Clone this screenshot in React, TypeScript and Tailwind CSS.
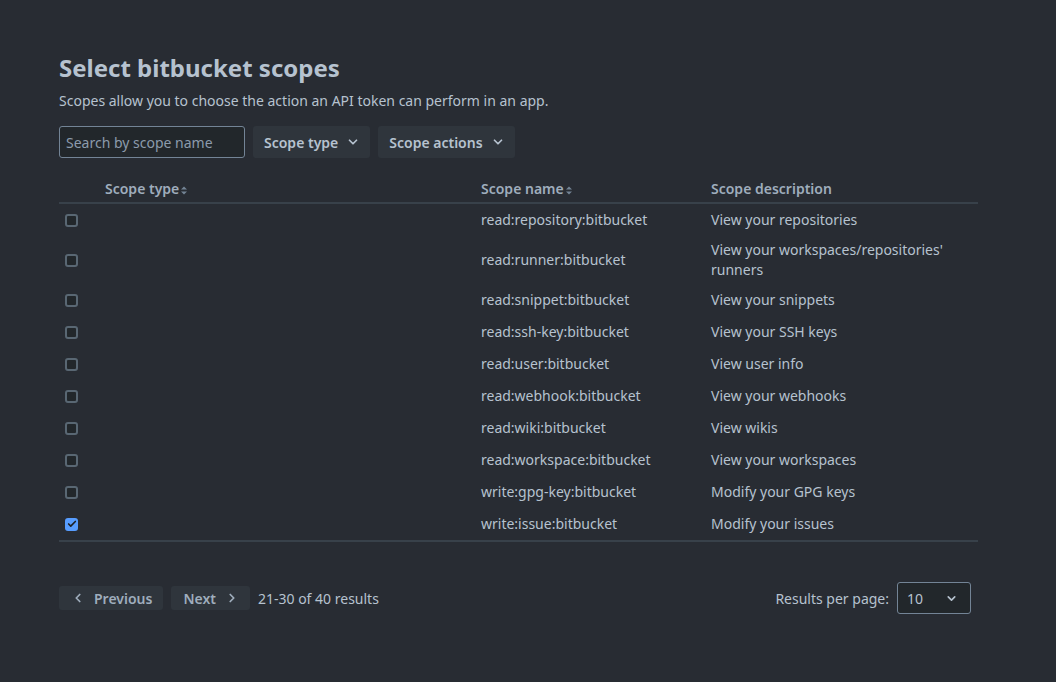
import React from 'react';
import { ChevronDown, ChevronLeft, ChevronRight, Check } from 'lucide-react';

const rows = [
  { name: 'read:repository:bitbucket', desc: 'View your repositories' },
  { name: 'read:runner:bitbucket', desc: "View your workspaces/repositories' runners" },
  { name: 'read:snippet:bitbucket', desc: 'View your snippets' },
  { name: 'read:ssh-key:bitbucket', desc: 'View your SSH keys' },
  { name: 'read:user:bitbucket', desc: 'View user info' },
  { name: 'read:webhook:bitbucket', desc: 'View your webhooks' },
  { name: 'read:wiki:bitbucket', desc: 'View wikis' },
  { name: 'read:workspace:bitbucket', desc: 'View your workspaces' },
  { name: 'write:gpg-key:bitbucket', desc: 'Modify your GPG keys' },
  { name: 'write:issue:bitbucket', desc: 'Modify your issues', checked: true },
];

const SortIcon = () => (
  <svg width="6" height="9" viewBox="0 0 6 9" className="ml-[2px] mt-[2px] inline-block">
    <path d="M0 3.5 L3 0.5 L6 3.5 Z" fill="#738496" />
    <path d="M0 5.5 L3 8.5 L6 5.5 Z" fill="#738496" />
  </svg>
);

const Checkbox = ({ checked }: { checked?: boolean }) =>
  checked ? (
    <div className="w-[13px] h-[13px] rounded-[3px] bg-[#579dff] flex items-center justify-center">
      <Check size={10} strokeWidth={4} className="text-[#1d2125]" />
    </div>
  ) : (
    <div className="w-[13px] h-[13px] rounded-[3px] border-2 border-[#596773] bg-[#22272b]" />
  );

const App: React.FC = () => {
  return (
    <div
      className="w-[1056px] h-[682px] bg-[#282c33] text-[#b6c2cf] pt-[54px] px-[59px]"
      style={{ fontFamily: '"Noto Sans", "Open Sans", sans-serif' }}
    >
      <h1 className="text-[24px] leading-[28px] font-bold text-[#b6c2cf]">Select bitbucket scopes</h1>
      <p className="text-[14px] leading-[20px] mt-[9px] text-[#b6c2cf]">
        Scopes allow you to choose the action an API token can perform in an app.
      </p>

      {/* Filters */}
      <div className="flex items-center gap-[8px] mt-[15px]">
        <div className="w-[186px] h-[32px] rounded-[3px] border border-[#738496] bg-[#22272b] flex items-center px-[6px]">
          <span className="text-[14px] text-[#8c9bab]">Search by scope name</span>
        </div>
        <button className="h-[32px] rounded-[3px] bg-[#2f353c] pl-[11px] pr-[10px] flex items-center gap-[8px] text-[14px] font-semibold text-[#b6c2cf]">
          Scope type
          <ChevronDown size={14} strokeWidth={3} />
        </button>
        <button className="h-[32px] rounded-[3px] bg-[#2f353c] pl-[11px] pr-[10px] flex items-center gap-[8px] text-[14px] font-semibold text-[#b6c2cf]">
          Scope actions
          <ChevronDown size={14} strokeWidth={3} />
        </button>
      </div>

      {/* Table */}
      <div className="w-[919px] mt-[22px]">
        <div className="grid grid-cols-[36px_376px_230px_1fr] h-[24px] items-start border-b-2 border-[#38414a] text-[14px] leading-[18px] font-semibold text-[#9fadbc]">
          <div />
          <div className="px-[10px] flex items-center">Scope type<SortIcon /></div>
          <div className="px-[10px] flex items-center">Scope name<SortIcon /></div>
          <div className="px-[10px]">Scope description</div>
        </div>
        <div className="border-b-2 border-[#38414a]">
          {rows.map((r) => (
            <div
              key={r.name}
              className="grid grid-cols-[36px_376px_230px_1fr] items-center min-h-[32px] py-[4px] text-[14px] leading-[20px]"
            >
              <div className="pl-[6px] flex items-center">
                <Checkbox checked={r.checked} />
              </div>
              <div />
              <div className="px-[10px]">{r.name}</div>
              <div className="px-[10px]">{r.desc}</div>
            </div>
          ))}
        </div>
      </div>

      {/* Pagination */}
      <div className="w-[912px] flex items-center justify-between mt-[40px]">
        <div className="flex items-center gap-[8px] text-[14px]">
          <button className="h-[24px] rounded-[3px] bg-[#2f353c] pl-[12px] pr-[11px] flex items-center gap-[9px] font-semibold text-[#9fadbc]">
            <ChevronLeft size={14} strokeWidth={3} />
            Previous
          </button>
          <button className="h-[24px] rounded-[3px] bg-[#2f353c] pl-[12px] pr-[11px] flex items-center gap-[9px] font-semibold text-[#9fadbc]">
            Next
            <ChevronRight size={14} strokeWidth={3} />
          </button>
          <span className="text-[#b6c2cf]">21-30 of 40 results</span>
        </div>
        <div className="flex items-center gap-[8px] text-[14px]">
          <span className="text-[#b6c2cf]">Results per page:</span>
          <div className="w-[74px] h-[32px] rounded-[3px] border border-[#738496] bg-[#22272b] flex items-center justify-between pl-[9px] pr-[12px]">
            <span>10</span>
            <ChevronDown size={13} strokeWidth={3} />
          </div>
        </div>
      </div>
    </div>
  );
};

export default App;
